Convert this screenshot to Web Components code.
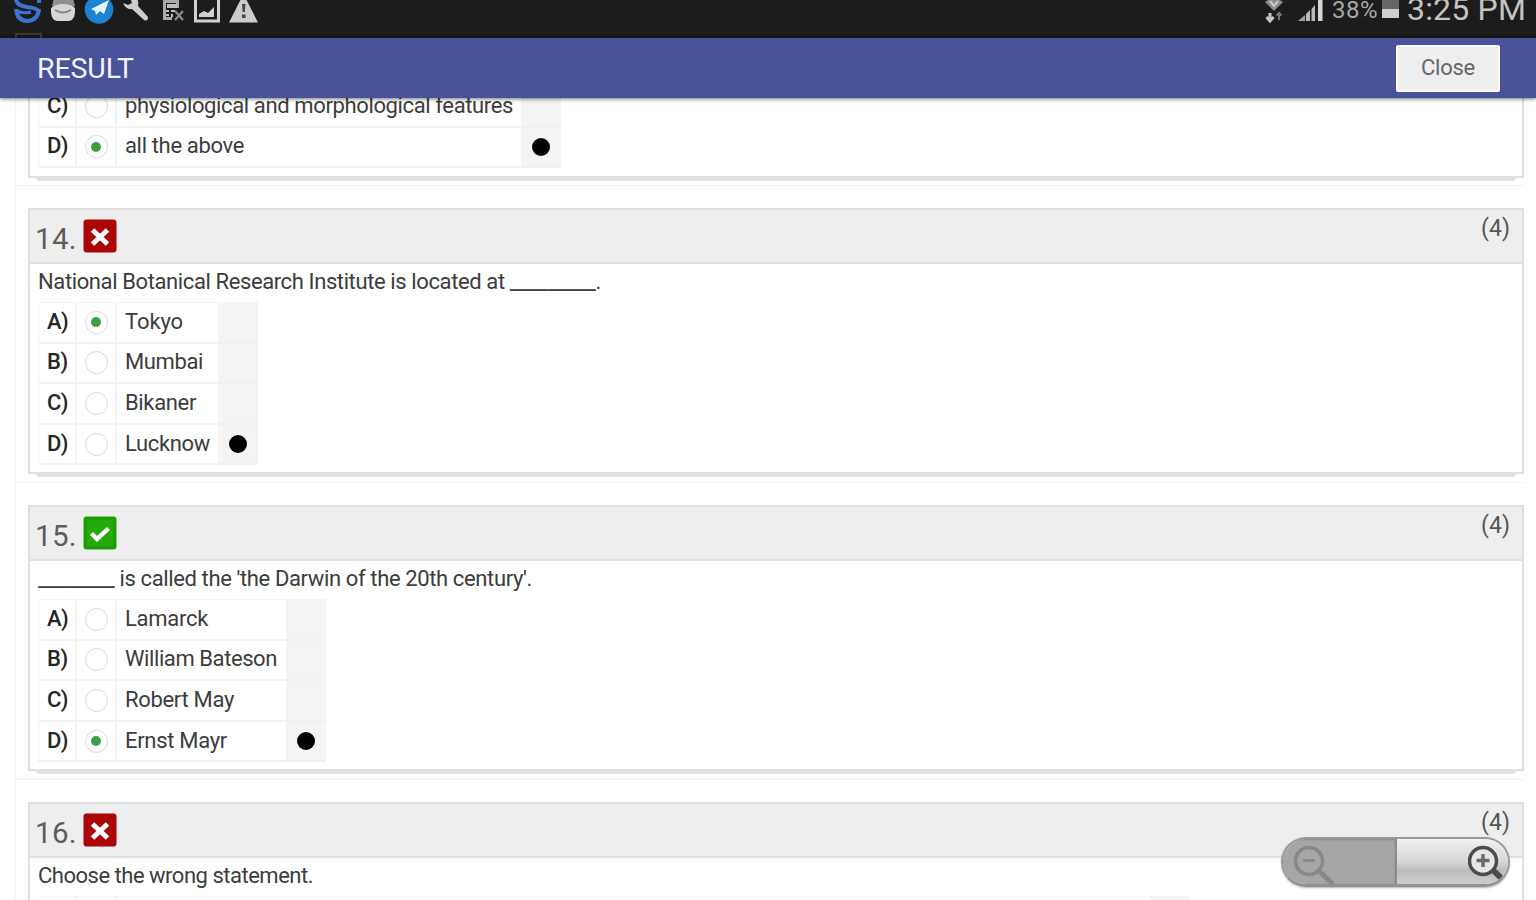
<!DOCTYPE html>
<html lang="en">
<head>
<meta charset="utf-8">
<title>Result</title>
<style>
    html, body {
        margin: 0;
        width: 1536px;
        height: 900px;
        overflow: hidden;
        background: #fff;
        font-family: Roboto, "Liberation Sans", sans-serif;
    }
</style>
</head>
<body>
<result-app></result-app>
<script>
// Text run that spreads its letters to fill the given width
class FitText extends HTMLElement {
    connectedCallback() {
        this.attachShadow({ mode: 'open' });
        this.shadowRoot.innerHTML = `
            <style>
                :host { display: inline-block; white-space: nowrap; }
            </style>
            <slot></slot>
        `;
        const target = Number(this.getAttribute('width'));
        const count = this.textContent.length;
        if (!target || !count) return;
        const range = document.createRange();
        range.selectNodeContents(this);
        const natural = range.getBoundingClientRect().width;
        this.style.letterSpacing = `${(target - natural) / count}px`;
    }
}

class StatusBar extends HTMLElement {
    constructor() {
        super();
        this.attachShadow({ mode: 'open' });
    }

    connectedCallback() {
        this.render();
    }

    render() {
        this.shadowRoot.innerHTML = `
            <style>
                :host {
                    display: block;
                    height: 38px;
                    box-sizing: border-box;
                    overflow: hidden;
                    background: linear-gradient(#1c1c1c 0 34px, #17170f 36px, #1a1b24 38px);
                    color: #cfcfcf;
                    position: relative;
                }
                .row {
                    display: flex;
                    justify-content: space-between;
                    height: 26px;
                }
                .left, .right { display: flex; align-items: flex-start; }
                .left { padding-left: 12px; }
                .right { padding-right: 10px; }
                svg { display: block; flex: none; overflow: visible; }
                .percent { font-size: 24px; line-height: 22px; margin: -1px 4px 0 5px; color: #a9a9a9; }
                .clock { font-size: 32px; line-height: 30px; margin: -6px 0 0 8px; color: #c4c4c4; }
                .ghost {
                    position: absolute;
                    left: 15px;
                    top: 33px;
                    width: 23px;
                    height: 8px;
                    border: 2px solid #3a3a3a;
                }
            </style>
            <div class="row">
                <div class="left">
                    <svg width="248" height="26" viewBox="12 0 248 26">
                        <g fill="none" stroke="#3f73cf" stroke-width="4">
                            <path d="M16 -2Q15 5 27 7Q37 8 38 11"/>
                            <path d="M16 9Q17 21 28 21Q38 20 39 9"/>
                            <path d="M39 -2V3"/>
                            <path d="M17 11Q24 14 31 12" stroke-width="3"/>
                        </g>
                        <path d="M54 -2H73L75 6H52Z" fill="#909090"/>
                        <path d="M51 8Q56 4 63 4Q71 4 75 8Q76 20 69 21H57Q50 20 51 8Z" fill="#d6d6d6"/>
                        <path d="M55 10Q63 15 71 10" fill="none" stroke="#858585" stroke-width="2"/>
                        <circle cx="99" cy="9.500" r="14.300" fill="#1d83cf"/>
                        <path d="M109 0L104 14L100 11L96 15L95 11L91 9Z" fill="#e4f4fb"/>
                        <path d="M123 3Q126 10 132 9L144 20Q148 22 148 17L138 6Q139 0 136 -3H130L132 3L128 5Z" fill="#cecece"/>
                        <path d="M163 0H179V8H176V3H166V17H172V20H163Z" fill="#aaa"/>
                        <path d="M167 4H177V8H167ZM166 10H169V12H166ZM171 10H175V12H171ZM166 14H169V16H166ZM171 14H173V17H171Z" fill="#bdbdbd"/>
                        <path d="M175 11L183 20M183 11L175 20" stroke="#8c8c8c" stroke-width="2.200"/>
                        <path d="M195.500 -2V21H218.500V-2" fill="none" stroke="#d0d0d0" stroke-width="3"/>
                        <path d="M199 17V14L204 11L208 13L214 7V17Z" fill="#d0d0d0"/>
                        <path d="M243.500 -6L258 22.500H229Z" fill="#cbcbcb"/>
                        <path d="M242 4H245.500L244.800 12H242.700ZM242 14.500H245.500V18H242Z" fill="#454545"/>
                    </svg>
                </div>
                <div class="right">
                    <svg width="62" height="26" viewBox="1264 0 62 26">
                        <path d="M1264 2Q1273 -5 1282 2L1273 11Z" fill="#8d8d8d"/>
                        <path d="M1269 1L1273 6L1277 1" stroke="#d0d0d0" stroke-width="2" fill="none"/>
                        <path d="M1269 13V21M1265.500 17L1269 21L1272.500 17" stroke="#c5c5c5" stroke-width="3" fill="none"/>
                        <path d="M1278 20V13M1275.500 15.500L1278 13L1280.500 15.500" stroke="#777" stroke-width="2" fill="none"/>
                        <path d="M1297 21L1304 15V21Z" fill="#a0a0a0"/>
                        <path d="M1305 14L1309 10V21H1305ZM1310.500 9L1314 5V21H1310.500Z" fill="#bbb"/>
                        <path d="M1317 -2H1321.500V21H1317Z" fill="#d5d5d5"/>
                    </svg>
                    <fit-text class="percent" width="46">38%</fit-text>
                    <svg width="17" height="26" viewBox="0 0 17 26">
                        <path d="M0 -3H17V10H0Z" fill="#666"/>
                        <path d="M0 9H17V18H0Z" fill="#cecece"/>
                    </svg>
                    <fit-text class="clock" width="119">3:25 PM</fit-text>
                </div>
            </div>
            <div class="ghost"></div>
        `;
    }
}

class TitleBar extends HTMLElement {
    constructor() {
        super();
        this.attachShadow({ mode: 'open' });
    }

    connectedCallback() {
        this.shadowRoot.innerHTML = `
            <style>
                :host {
                    display: flex;
                    justify-content: space-between;
                    align-items: center;
                    height: 60px;
                    box-sizing: border-box;
                    padding: 0 36px 0 37px;
                    background: #475299;
                    box-shadow: 0 1px 4px rgba(0, 0, 0, .55);
                    position: relative;
                    z-index: 1;
                }
                .title { color: #f1f2fb; font-size: 28.5px; line-height: 32px; margin-top: 2px; }
                button {
                    width: 104px;
                    height: 47px;
                    padding: 0 0 2px;
                    border: 2px solid #fbfbfb;
                    border-radius: 2px;
                    background: #eee;
                    color: #666;
                    font: 22px Roboto, sans-serif;
                }
            </style>
            <fit-text class="title" width="97">RESULT</fit-text>
            <button><fit-text width="54">Close</fit-text></button>
        `;
    }
}

class AnswerOption extends HTMLElement {
    constructor() {
        super();
        this.attachShadow({ mode: 'open' });
    }

    connectedCallback() {
        const checked = this.hasAttribute('checked');
        const correct = this.hasAttribute('correct');
        this.shadowRoot.innerHTML = `
            <style>
                :host {
                    display: grid;
                    grid-template-columns: 39px 40px var(--answer-width, 101px) 40px;
                    height: 40.6px;
                    font-size: 22px;
                    color: #3c3c3c;
                }
                div {
                    display: flex;
                    align-items: center;
                    box-sizing: border-box;
                    border-right: 2px solid #f4f4f4;
                    border-bottom: 2px solid #f3f3f3;
                }
                .letter { padding: 0 0 2px 8px; font-weight: 500; color: #262626; border-left: 1px solid #f4f4f4; }
                .choice { justify-content: center; }
                .text { padding: 0 0 2px 8px; border-right: 0; }
                .key { justify-content: center; background: #f4f4f4; border-color: #f0f0f0; border-right: 0; }
                .radio {
                    width: 23px;
                    height: 23px;
                    box-sizing: border-box;
                    border: 1.5px solid #d8d8d8;
                    border-radius: 50%;
                    display: grid;
                    place-items: center;
                }
                .radio.on::after {
                    content: '';
                    width: 10px;
                    height: 10px;
                    border-radius: 50%;
                    background: #3b9f45;
                }
                .dot { width: 18px; height: 18px; border-radius: 50%; background: #000; }
            </style>
            <div class="letter"><fit-text width="21">${this.getAttribute('letter')}</fit-text></div>
            <div class="choice"><span class="radio ${checked ? 'on' : ''}"></span></div>
            <div class="text"><slot></slot></div>
            <div class="key">${correct ? '<span class="dot"></span>' : ''}</div>
        `;
    }
}

class QuestionCard extends HTMLElement {
    constructor() {
        super();
        this.attachShadow({ mode: 'open' });
    }

    connectedCallback() {
        this.render();
    }

    icon() {
        if (this.getAttribute('status') === 'right') {
            return `
                <svg width="34" height="34" viewBox="0 0 34 34">
                    <rect x=".5" y=".5" width="33" height="33" rx="3" fill="#1b9d05"/>
                    <rect x="4" y="4" width="26" height="26" rx="2" fill="#26a90c"/>
                    <path d="M7 19L10 16L14 20L24 11L27 14L14 26Z" fill="#fff"/>
                </svg>
            `;
        }
        return `
            <svg width="34" height="34" viewBox="0 0 34 34">
                <rect x=".5" y=".5" width="33" height="33" rx="3" fill="#ab0508"/>
                <path d="M9.500 11L24.500 25M24.500 11L9.500 25" stroke="#fff" stroke-width="5"/>
            </svg>
        `;
    }

    render() {
        const number = this.getAttribute('number');
        const header = number ? `
            <header>
                <fit-text class="number" width="42">${number}.</fit-text>
                ${this.icon()}
                <fit-text class="marks" width="29">(4)</fit-text>
            </header>
            <div class="question"><slot name="question"></slot></div>
        ` : '';
        this.shadowRoot.innerHTML = `
            <style>
                :host {
                    display: block;
                    box-sizing: border-box;
                    height: 297px;
                    margin: 0 12px 0 15px;
                    padding: 22px 0 0 12px;
                    border-left: 1px solid #f3f3f3;
                    border-top: 1px solid #f3f3f3;
                }
                :host([continued]) { height: 99px; padding-top: 0; border-top: 0; }
                .card {
                    position: relative;
                    box-sizing: border-box;
                    width: 1496px;
                    height: 266px;
                    border: 2px solid #dfdfdf;
                    background: #fff;
                }
                :host([continued]) .card { height: 92px; padding-top: 1px; border-top: 0; }
                /* lifted paper edge */
                .card::after {
                    content: '';
                    position: absolute;
                    left: 6px;
                    right: 6px;
                    bottom: -5px;
                    height: 3px;
                    background: #e2e2e2;
                    border-radius: 0 0 8px 8px;
                }
                header {
                    display: flex;
                    align-items: flex-start;
                    box-sizing: border-box;
                    height: 54px;
                    padding: 9px 12px 0 5px;
                    background: #eee;
                    border-bottom: 2px solid #e0e0e0;
                }
                svg { display: block; flex: none; }
                .number { font-size: 29.5px; line-height: 34px; width: 48px; margin-top: 3px; color: #5c5c5c; }
                .marks { margin: -4px 0 0 auto; font-size: 23px; line-height: 28px; color: #555; }
                .question { height: 38px; padding-left: 8px; font-size: 22px; line-height: 35px; color: #3c3c3c; }
                .options { width: fit-content; margin-left: 8px; border-top: 1px solid #f3f3f3; }
                :host([continued]) .options { border-top: 0; }
            </style>
            <div class="card">
                ${header}
                <div class="options"><slot></slot></div>
            </div>
        `;
    }
}

class ZoomControls extends HTMLElement {
    constructor() {
        super();
        this.attachShadow({ mode: 'open' });
    }

    connectedCallback() {
        this.shadowRoot.innerHTML = `
            <style>
                :host {
                    position: absolute;
                    left: 1281px;
                    top: 837px;
                    display: flex;
                    box-sizing: border-box;
                    width: 229px;
                    height: 50px;
                    border: 2px solid #999;
                    border-bottom: 3px solid #929292;
                    border-radius: 25px;
                    overflow: hidden;
                    box-shadow: 0 1px 2px rgba(0, 0, 0, .3);
                }
                .out, .in { flex: 1; display: flex; }
                .out { background: #a6a6a6; border-right: 2px solid #8b8b8b; box-shadow: inset 0 1px 2px #888; }
                .in { background: linear-gradient(#f1f1f1, #d6d6d6 50%, #bdbdbd 70%, #ccc); justify-content: flex-end; }
                svg { display: block; }
            </style>
            <div class="out">
                <svg width="60" height="45" viewBox="1283 839 60 45" fill="none" stroke="#888">
                    <circle cx="1309" cy="861" r="13.500" stroke-width="3.500"/>
                    <path d="M1303 860.500H1315" stroke-width="3"/>
                    <path d="M1319 871L1333 884" stroke-width="5"/>
                </svg>
            </div>
            <div class="in">
                <svg width="40" height="45" viewBox="1467 839 40 45" fill="none" stroke="#4b4b4b">
                    <circle cx="1482" cy="861" r="13.500" stroke-width="3.500" fill="#e6e6e6"/>
                    <path d="M1475.500 860.500H1488.500M1482 854V867" stroke="#6a6a6a" stroke-width="3.500"/>
                    <path d="M1491 869L1501 879" stroke-width="6"/>
                </svg>
            </div>
        `;
    }
}

class ResultApp extends HTMLElement {
    constructor() {
        super();
        this.attachShadow({ mode: 'open' });
    }

    connectedCallback() {
        this.shadowRoot.innerHTML = `
            <style>
                :host { display: flex; flex-direction: column; width: 1536px; height: 900px; position: relative; overflow: hidden; }
                main { flex: 1; min-height: 0; overflow: hidden; }
                .scrolled { margin-top: -12px; }
            </style>
            <status-bar></status-bar>
            <title-bar></title-bar>
            <main>
                <div class="scrolled">
                    <question-card continued style="--answer-width: 404px">
                        <answer-option letter="C)"><fit-text width="388">physiological and morphological features</fit-text></answer-option>
                        <answer-option letter="D)" checked correct><fit-text width="119">all the above</fit-text></answer-option>
                    </question-card>
                    <question-card number="14" status="wrong">
                        <fit-text slot="question" width="563">National Botanical Research Institute is located at _________.</fit-text>
                        <answer-option letter="A)" checked><fit-text width="58">Tokyo</fit-text></answer-option>
                        <answer-option letter="B)"><fit-text width="78">Mumbai</fit-text></answer-option>
                        <answer-option letter="C)"><fit-text width="71">Bikaner</fit-text></answer-option>
                        <answer-option letter="D)" correct><fit-text width="85">Lucknow</fit-text></answer-option>
                    </question-card>
                    <question-card number="15" status="right" style="--answer-width: 169px">
                        <fit-text slot="question" width="494">________ is called the 'the Darwin of the 20th century'.</fit-text>
                        <answer-option letter="A)"><fit-text width="83">Lamarck</fit-text></answer-option>
                        <answer-option letter="B)"><fit-text width="152">William Bateson</fit-text></answer-option>
                        <answer-option letter="C)"><fit-text width="109">Robert May</fit-text></answer-option>
                        <answer-option letter="D)" checked correct><fit-text width="102">Ernst Mayr</fit-text></answer-option>
                    </question-card>
                    <question-card number="16" status="wrong" style="--answer-width: 1033px">
                        <fit-text slot="question" width="275">Choose the wrong statement.</fit-text>
                        <answer-option letter=""></answer-option>
                    </question-card>
                </div>
            </main>
            <zoom-controls></zoom-controls>
        `;
    }
}

customElements.define('fit-text', FitText);
customElements.define('status-bar', StatusBar);
customElements.define('title-bar', TitleBar);
customElements.define('answer-option', AnswerOption);
customElements.define('question-card', QuestionCard);
customElements.define('zoom-controls', ZoomControls);
customElements.define('result-app', ResultApp);
</script>
</body>
</html>
